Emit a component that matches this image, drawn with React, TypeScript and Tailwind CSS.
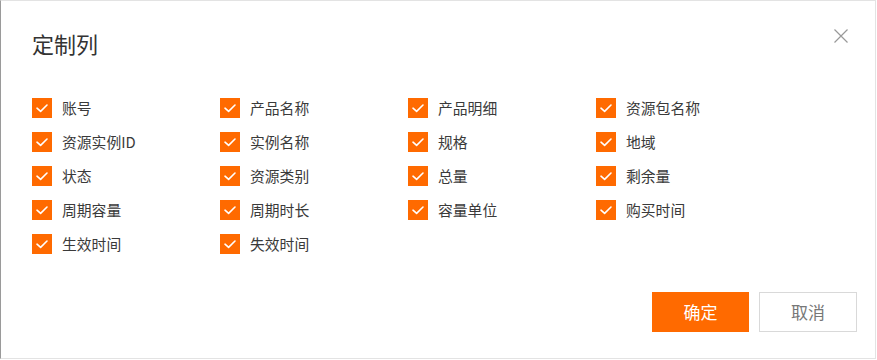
const columns: string[] = [
  "账号",
  "产品名称",
  "产品明细",
  "资源包名称",
  "资源实例ID",
  "实例名称",
  "规格",
  "地域",
  "状态",
  "资源类别",
  "总量",
  "剩余量",
  "周期容量",
  "周期时长",
  "容量单位",
  "购买时间",
  "生效时间",
  "失效时间",
];

function CheckBox() {
  return (
    <span className="w-5 h-5 bg-[#ff6a00] flex items-center justify-center shrink-0">
      <svg width="20" height="20" viewBox="0 0 20 20" fill="none">
        <path d="M5 10.2 L8.6 13.4 L15 7" stroke="#fff" strokeWidth="1.6" strokeLinecap="round" strokeLinejoin="round" />
      </svg>
    </span>
  );
}

export default function App() {
  return (
    <div
      className="w-[876px] h-[359px] bg-white border border-[#e3e3e3] border-l-[#9a9a9a] flex flex-col"
      style={{ fontFamily: '"Noto Sans CJK SC", "Liberation Sans", sans-serif' }}
    >
      {/* ── Header ── */}
      <div className="flex items-start justify-between pl-[31px] pr-[27px] pt-[26px]">
        <h1 className="text-[22px] leading-[32px] text-[#333]">定制列</h1>
        <button className="mt-[2px] text-[#999]">
          <svg width="14" height="14" viewBox="0 0 14 14" fill="none">
            <path d="M0.5 0.5 L13.5 13.5 M13.5 0.5 L0.5 13.5" stroke="#999" strokeWidth="1.2" />
          </svg>
        </button>
      </div>

      {/* ── Options ── */}
      <div className="grid grid-cols-[188px_188px_188px_188px] gap-y-[14px] pl-[31px] mt-[39px]">
        {columns.map((c) => (
          <label key={c} className="flex items-center gap-[10px] h-5">
            <CheckBox />
            <span className="text-[14.8px] text-[#3a3a3a] whitespace-nowrap">{c}</span>
          </label>
        ))}
      </div>

      {/* ── Footer ── */}
      <div className="mt-auto flex justify-end gap-[10px] pr-[18px] pb-[26px]">
        <button className="w-[97px] h-[40px] bg-[#ff6a00] text-white text-[17px]">确定</button>
        <button className="w-[98px] h-[40px] border border-[#d9d9d9] text-[#777] text-[17px]">取消</button>
      </div>
    </div>
  );
}
